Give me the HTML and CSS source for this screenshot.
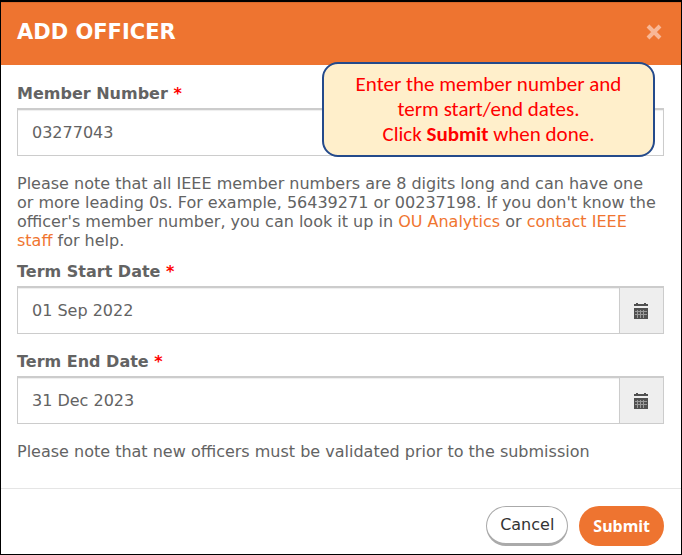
FILE: index.html
```
<!DOCTYPE html>
<html lang="en">
<head>
    <meta charset="UTF-8">
    <meta name="viewport" content="width=device-width, initial-scale=1.0">
    <title>Add Officer</title>
    <link rel="stylesheet" href="styles.css">
</head>
<body>

<form class="modal">
    <header class="modal-header">
        <h1>ADD OFFICER</h1>
        <button type="button" class="close" aria-label="Close">
            <svg width="16" height="16" viewBox="0 0 16 16">
                <path d="M2 2L14 14M14 2L2 14" stroke="currentColor" stroke-width="4"/>
            </svg>
        </button>
    </header>

    <div class="modal-body">
        <label for="memberNumber">Member Number <span class="required">*</span></label>
        <div class="field">
            <input type="text" id="memberNumber" value="03277043">
        </div>
        <p class="help">Please note that all IEEE member numbers are 8 digits long and can have one or more leading 0s. For example, 56439271 or 00237198. If you don't know the officer's member number, you can look it up in <a href="#">OU Analytics</a> or <a href="#">contact IEEE staff</a> for help.</p>

        <label for="startDate">Term Start Date <span class="required">*</span></label>
        <div class="field">
            <input type="text" id="startDate" value="01 Sep 2022">
            <button type="button" class="calendar" aria-label="Choose start date">
                <svg width="16" height="16" viewBox="0 0 16 16" fill="currentColor">
                    <path d="M3 0h2v1h6V0h2v1h2v2H1V1h2zM1 5h14v11H1z"/>
                    <path d="M2 8.500h12M2 11.500h12M4.500 7v8M7.500 7v8M10.500 7v8" stroke="#999" stroke-width="1"/>
                </svg>
            </button>
        </div>

        <label for="endDate">Term End Date <span class="required">*</span></label>
        <div class="field">
            <input type="text" id="endDate" value="31 Dec 2023">
            <button type="button" class="calendar" aria-label="Choose end date">
                <svg width="16" height="16" viewBox="0 0 16 16" fill="currentColor">
                    <path d="M3 0h2v1h6V0h2v1h2v2H1V1h2zM1 5h14v11H1z"/>
                    <path d="M2 8.500h12M2 11.500h12M4.500 7v8M7.500 7v8M10.500 7v8" stroke="#999" stroke-width="1"/>
                </svg>
            </button>
        </div>

        <p class="note">Please note that new officers must be validated prior to the submission</p>
    </div>

    <footer class="modal-footer">
        <button type="button" class="btn cancel">Cancel</button>
        <button type="submit" class="btn submit">Submit</button>
    </footer>

    <div class="callout">
        Enter the member number and<br>
        term start/end dates.<br>
        Click <strong>Submit</strong> when done.
    </div>
</form>

</body>
</html>
```
FILE: styles.css
```
* {
    box-sizing: border-box;
}
body {
    margin: 0;
    background: #fff;
    color: #636363;
    font-family: "DejaVu Sans", Verdana, sans-serif;
    font-size: 16px;
    line-height: 20px;
}
button, input {
    font: inherit;
    color: inherit;
}
.modal {
    position: relative;
    border: 1px solid #000;
    border-top-width: 2px;
    background: #fff;
}
.modal-header {
    display: flex;
    justify-content: space-between;
    align-items: center;
    height: 63px;
    padding: 0 19px 4px 16px;
    background: #ee7430;
    border-top: 1px solid #d9692b;
}
.modal-header h1 {
    margin: 0;
    color: #fff;
    font-size: 21px;
    line-height: 24px;
}
.close {
    display: flex;
    padding: 0;
    border: none;
    background: none;
    color: #f8b796;
    cursor: pointer;
}
.modal-body {
    padding: 19px 17px 26px 16px;
}
label {
    display: block;
    margin-bottom: 4px;
    font-weight: bold;
}
.required {
    color: #f00;
}
.field {
    display: flex;
    height: 48px;
    margin-bottom: 18px;
    border: 1px solid #ccc;
    border-top-width: 2px;
}
.field input {
    flex: 1;
    min-width: 0;
    padding: 0 14px;
    border: none;
    background: #fff;
    box-shadow: inset 0 1px 1px #eee;
}
.calendar {
    display: flex;
    justify-content: center;
    align-items: center;
    width: 44px;
    padding: 0 2px 0 0;
    border: none;
    border-left: 1px solid #ccc;
    background: #eee;
    color: #505050;
    cursor: pointer;
}
.help {
    margin: 0 0 12px;
    padding-right: 4px;
    line-height: 19px;
}
.help a {
    color: #f07530;
    text-decoration: none;
}
.note {
    margin: 0;
}
.modal-footer {
    display: flex;
    justify-content: flex-end;
    gap: 11px;
    padding: 17px 17px 8px;
    border-top: 1px solid #e5e5e5;
}
.btn {
    height: 40px;
    border-radius: 20px;
    padding: 0 13px;
    cursor: pointer;
}
.cancel {
    border: 1px solid #aaa;
    border-bottom: 3px solid #aaa;
    background: #fff;
    color: #333;
}
.submit {
    padding: 0 14px;
    border: none;
    background: #ee7430;
    color: #fff;
    font-family: "Noto Sans", sans-serif;
    font-weight: bold;
}
.callout {
    position: absolute;
    top: 60px;
    right: 26px;
    width: 333px;
    padding: 8px 0;
    border: 2px solid #244a8b;
    border-radius: 16px;
    background: #ffefcb;
    color: #f00;
    font-family: Carlito, Lato, sans-serif;
    font-size: 21px;
    line-height: 25px;
    text-align: center;
}
```
